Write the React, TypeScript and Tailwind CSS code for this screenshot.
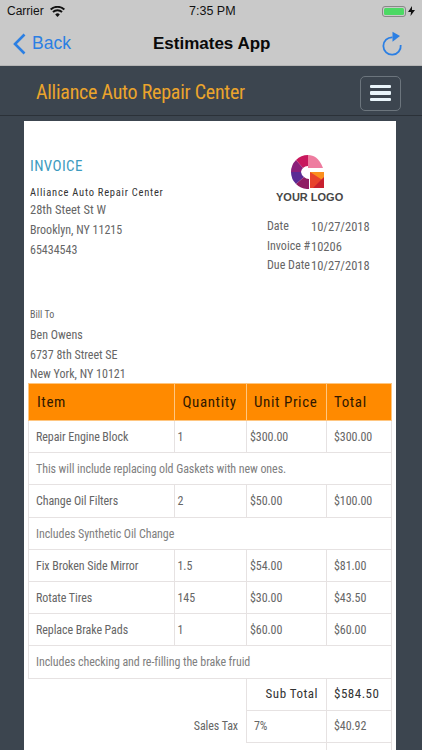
const narrow = "font-['Liberation_Sans_Narrow','Roboto_Condensed','Liberation_Sans',sans-serif]";

function Wifi() {
  return (
    <svg width="15" height="11" viewBox="0 0 15 11" fill="#111">
      <path d="M7.5 11 5.2 8.4a3.4 3.4 0 0 1 4.6 0L7.5 11Z" />
      <path d="M3.6 6.7 2.3 5.2a7.8 7.8 0 0 1 10.4 0l-1.3 1.5a5.8 5.8 0 0 0-7.8 0Z" />
      <path d="M1.3 4.2 0 2.7a11.3 11.3 0 0 1 15 0l-1.3 1.5a9.3 9.3 0 0 0-12.4 0Z" />
    </svg>
  );
}

function Logo() {
  return (
    <svg width="33" height="34" viewBox="0 0 33 34">
      <path d="M17 0A17 17 0 0 0 5 5l7 8a7 7 0 0 1 5-2Z" fill="#c8175d" />
      <path d="M17 0c6 0 11 3 15 13H17Z" fill="#ee7c9f" />
      <path d="M5 5a17 17 0 0 0-5 12h10a7 7 0 0 1 2-4Z" fill="#8a1f7a" />
      <path d="M0 17a17 17 0 0 0 5 12l8-7a7 7 0 0 1-3-5Z" fill="#5a2a94" />
      <path d="M5 29a17 17 0 0 0 13 5V24a7 7 0 0 1-5-2Z" fill="#8f1d63" />
      <rect x="19" y="17" width="14" height="16" fill="#e8432d" />
      <path d="M19 17h14v9Z" fill="#fb8f1e" />
      <path d="M33 22v11H22Z" fill="#c8202f" />
    </svg>
  );
}

function Row({ a, b, c, d }: { a: string; b: string; c: string; d: string }) {
  return (
    <tr className="h-[32.2px]">
      <td className="border border-[#e6e2e2] pl-[7px] pt-[1px]">{a}</td>
      <td className="border border-[#e6e2e2] pl-[3px] pt-[1px]">{b}</td>
      <td className="border border-[#e6e2e2] pl-[3px] pt-[1px]">{c}</td>
      <td className="border border-[#e6e2e2] pl-[7px] pt-[1px]">{d}</td>
    </tr>
  );
}

function Note({ t }: { t: string }) {
  return (
    <tr className="h-[32.2px]">
      <td colSpan={4} className="border border-[#e6e2e2] pl-[7px] pt-[1px] text-[#808080]">{t}</td>
    </tr>
  );
}

export default function App() {
  return (
    <div className="h-[750px] w-[422px] overflow-hidden bg-[#3c454f] font-['Liberation_Sans',sans-serif]">
      <div className="h-[66px] bg-[#c9c9c9] border-b border-[#b5b5b5]">
        <div className="relative flex h-[22px] items-center justify-between px-[7px] text-[12px] text-[#111]">
          <div className="flex items-center gap-[6px]"><span>Carrier</span><Wifi /></div>
          <span className="absolute left-[189px] font-medium text-[12.5px]">7:35 PM</span>
          <div className="flex items-center gap-[2px]">
            <div className="flex h-[11px] w-[24px] items-center rounded-[3px] border border-[#888] p-[1px]">
              <div className="h-full w-full rounded-[1.5px] bg-[#4cd964]" />
            </div>
            <svg width="7" height="10" viewBox="0 0 7 10" fill="#111"><path d="M4 0 0 6h3L2.5 10 7 4H4Z" /></svg>
          </div>
        </div>
        <div className="relative flex h-[43px] items-center justify-between pl-[13px] pr-[19px]">
          <div className="flex items-center gap-[6px] text-[#2b7fe3]">
            <svg width="13" height="22" viewBox="0 0 13 22" fill="none" stroke="#2b7fe3" strokeWidth="2.6"><path d="M11.5 1.5 2 11l9.5 9.5" /></svg>
            <span className="text-[17.5px]">Back</span>
          </div>
          <span className="absolute left-[153px] text-[17px] font-semibold text-[#0a0a0a]">Estimates App</span>
          <svg width="21" height="25" viewBox="0 0 21 25" fill="none" stroke="#2b7fe3" strokeWidth="1.8">
            <path d="M10.5 6.3A8.7 8.7 0 1 0 18.7 14" />
            <path d="M10.5.7 18 5l-7.5 5.7Z" fill="#2b7fe3" stroke="none" />
          </svg>
        </div>
      </div>
      <header className="flex h-[50px] items-center justify-between border-b border-[#2b3138] pl-[36px] pr-[21px] pt-[4px]">
        <span className={`${narrow} -mt-[1px] text-[20px] font-normal tracking-[-0.25px] text-[#eba42c]`}>Alliance Auto Repair Center</span>
        <div className="mt-[1px] flex h-[35px] w-[41px] flex-col items-center justify-center gap-[3px] rounded-[5px] border border-[#6c757d]">
          <div className="h-[3.5px] w-[21px] rounded-[1px] bg-[#e9f4fa]" />
          <div className="h-[3.5px] w-[21px] rounded-[1px] bg-[#e9f4fa]" />
          <div className="h-[3.5px] w-[21px] rounded-[1px] bg-[#e9f4fa]" />
        </div>
      </header>
      <main className={`${narrow} ml-[24px] mr-[26px] mt-[5px] bg-white px-[4px] pt-[36px] text-[12px] text-[#666]`}>
        <div className="flex h-[226px] justify-between">
          <div className="pl-[2px]">
            <div className="text-[15px] leading-[18px] tracking-[0.4px] text-[#3d9bc0]">INVOICE</div>
            <div className="mt-[12px] text-[10.5px] font-normal leading-[12px] tracking-[0.75px] text-[#333]">Alliance Auto Repair Center</div>
            <div className="mt-[1px] leading-[20px]">
              <div className="text-[12.5px]">28th Steet St W</div>
              <div>Brooklyn, NY 11215</div>
              <div>65434543</div>
            </div>
            <div className="mt-[48px] text-[10px] leading-[14px]">Bill To</div>
            <div className="mt-[4px] leading-[19.6px]">
              <div>Ben Owens</div>
              <div>6737 8th Street SE</div>
              <div>New York, NY 10121</div>
            </div>
          </div>
          <div className="w-[125px] pr-[22px]">
            <div className="-mt-[2px] pl-[24px]">
              <Logo />
            </div>
            <div className="mt-[2px] whitespace-nowrap pl-[9px] font-['Liberation_Sans',sans-serif] text-[11px] font-bold leading-[13px] text-[#474747]">YOUR LOGO</div>
            <div className="mt-[13px] leading-[19.5px]">
              <div className="flex"><span className="w-[44px]">Date</span><span className="text-[12.5px]">10/27/2018</span></div>
              <div className="flex"><span className="w-[44px]">Invoice #</span><span className="text-[12.5px]">10206</span></div>
              <div className="flex"><span className="w-[44px] whitespace-nowrap">Due Date</span><span className="text-[12.5px]">10/27/2018</span></div>
            </div>
          </div>
        </div>
        <table className="w-[363px] table-fixed border-collapse text-[12px] tracking-[-0.08px]">
          <colgroup>
            <col className="w-[145.5px]" />
            <col className="w-[72.5px]" />
            <col className="w-[80px]" />
            <col className="w-[65px]" />
          </colgroup>
          <thead>
            <tr className="h-[37px] bg-[#ff8a00] text-[15px] tracking-[0.6px] text-[#301800]">
              <th className="border border-[#ffc680] pl-[8px] text-left font-normal">Item</th>
              <th className="border border-[#ffc680] pl-[8px] text-left font-normal">Quantity</th>
              <th className="border border-[#ffc680] pl-[7px] text-left font-normal">Unit Price</th>
              <th className="border border-[#ffc680] pl-[7px] text-left font-normal">Total</th>
            </tr>
          </thead>
          <tbody>
            <Row a="Repair Engine Block" b="1" c="$300.00" d="$300.00" />
            <Note t="This will include replacing old Gaskets with new ones." />
            <Row a="Change Oil Filters" b="2" c="$50.00" d="$100.00" />
            <Note t="Includes Synthetic Oil Change" />
            <Row a="Fix Broken Side Mirror" b="1.5" c="$54.00" d="$81.00" />
            <Row a="Rotate Tires" b="145" c="$30.00" d="$43.50" />
            <Row a="Replace Brake Pads" b="1" c="$60.00" d="$60.00" />
            <Note t="Includes checking and re-filling the brake fruid" />
            <tr className="h-[32.2px]">
              <td colSpan={2} />
              <td className="border border-[#e6e2e2] pr-[8px] text-right text-[13px] font-normal tracking-[0.5px] text-[#333]">Sub Total</td>
              <td className="border border-[#e6e2e2] pl-[7px] text-[13px] font-normal tracking-[0.5px] text-[#333]">$584.50</td>
            </tr>
            <tr className="h-[32.2px]">
              <td colSpan={2} className="pr-[8px] text-right">Sales Tax</td>
              <td className="border border-[#e6e2e2] pl-[7px]">7%</td>
              <td className="border border-[#e6e2e2] pl-[7px]">$40.92</td>
            </tr>
            <tr className="h-[32.2px]">
              <td colSpan={2} />
              <td />
              <td className="border border-[#e6e2e2]" />
            </tr>
          </tbody>
        </table>
      </main>
    </div>
  );
}
